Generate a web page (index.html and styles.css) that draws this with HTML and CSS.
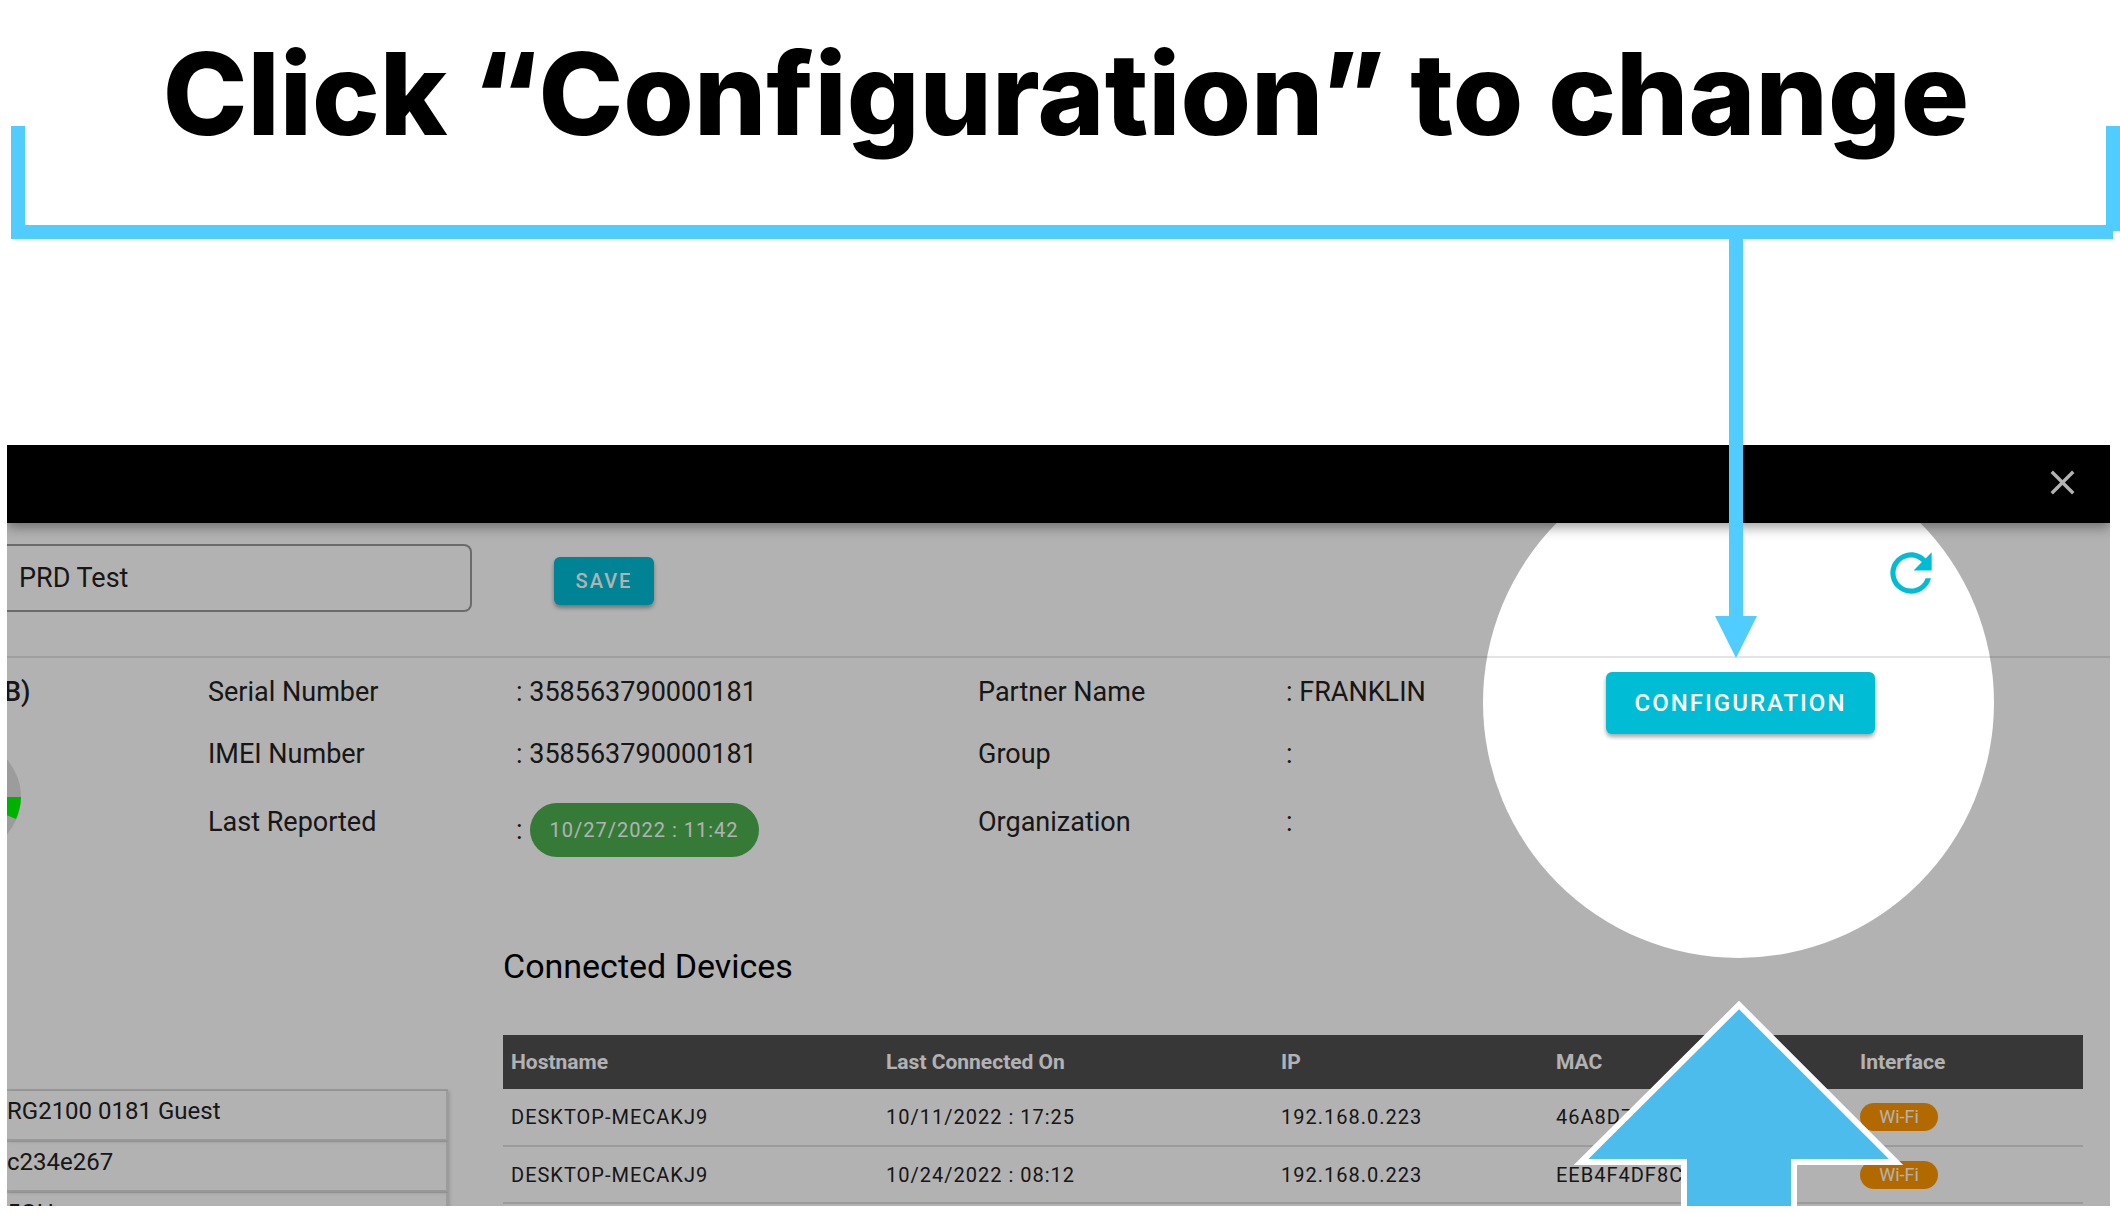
FILE: index.html
```html
<!DOCTYPE html>
<html lang="en">
<head>
<meta charset="utf-8">
<title>Click “Configuration” to change</title>
<link rel="stylesheet" href="styles.css">
</head>
<body>
<header class="callout">
  <h1 class="callout-title">Click “Configuration” to change</h1>
  <div class="bracket"><span class="bracket-end"></span></div>
  <svg class="pointer" width="42" height="419" viewBox="0 0 42 419" aria-hidden="true"><path d="M14 0h14v377h14L21 419 0 377h14z" fill="#50ccff"/></svg>
</header>

<main class="panel">
  <div class="topbar">
    <button class="close" type="button" aria-label="Close">
      <svg width="41" height="41" viewBox="0 0 24 24"><path fill="#fff" d="M19,6.41L17.59,5L12,10.59L6.41,5L5,6.41L10.59,12L5,17.59L6.41,19L12,13.41L17.59,19L19,17.59L13.41,12L19,6.41Z"/></svg>
    </button>
  </div>

  <form class="name-row">
    <input class="name-input" type="text" value="PRD Test" aria-label="Device name">
    <button class="btn btn-save" type="button">SAVE</button>
    <button class="refresh" type="button" aria-label="Refresh">
      <svg width="62" height="62" viewBox="0 0 24 24"><path fill="#00bcd4" d="M17.65,6.35C16.2,4.9 14.21,4 12,4A8,8 0 0,0 4,12A8,8 0 0,0 12,20C15.73,20 18.84,17.45 19.73,14H17.65C16.83,16.33 14.61,18 12,18A6,6 0 0,1 6,12A6,6 0 0,1 12,6C13.66,6 15.14,6.69 16.22,7.78L13,11H20V4L17.65,6.35Z"/></svg>
    </button>
  </form>

  <section class="summary">
    <div class="usage">
      <strong class="usage-title">B)</strong>
      <svg class="usage-chart" width="14" height="114" viewBox="43 -57 14 114" aria-hidden="true">
        <circle r="57" fill="#e0e0e0"/>
        <path d="M0 0H57A57 57 0 0 1 52 22Z" fill="#00ff00"/>
      </svg>
    </div>
    <dl class="facts">
      <dt>Serial Number</dt><dd>: 358563790000181</dd>
      <dt>IMEI Number</dt><dd>: 358563790000181</dd>
      <dt>Last Reported</dt><dd class="stamp-line">:<span class="stamp">10/27/2022 : 11:42</span></dd>
    </dl>
    <dl class="facts">
      <dt>Partner Name</dt><dd>: FRANKLIN</dd>
      <dt>Group</dt><dd>:</dd>
      <dt>Organization</dt><dd>:</dd>
    </dl>
    <button class="btn btn-config" type="button">CONFIGURATION</button>
  </section>

  <div class="lower">
    <ul class="ssids">
      <li>RG2100 0181 Guest</li>
      <li>c234e267</li>
      <li>5GHz</li>
    </ul>
    <section class="devices">
      <h2 class="devices-title">Connected Devices</h2>
      <table class="devices-table">
        <colgroup><col class="c-host"><col class="c-last"><col class="c-ip"><col class="c-mac"><col class="c-if"></colgroup>
        <thead><tr><th>Hostname</th><th>Last Connected On</th><th>IP</th><th>MAC</th><th>Interface</th></tr></thead>
        <tbody>
          <tr><td>DESKTOP-MECAKJ9</td><td>10/11/2022 : 17:25</td><td>192.168.0.223</td><td>46A8D7</td><td><span class="chip">Wi-Fi</span></td></tr>
          <tr><td>DESKTOP-MECAKJ9</td><td>10/24/2022 : 08:12</td><td>192.168.0.223</td><td>EEB4F4DF8C</td><td><span class="chip">Wi-Fi</span></td></tr>
        </tbody>
      </table>
    </section>
  </div>

  <div class="spotlight"></div>
  <svg class="big-arrow" width="330" height="206" viewBox="0 0 330 206" aria-hidden="true"><path d="M110 216V162H7L165 5 322 162H220V216" fill="#4cbcec" stroke="#fff" stroke-width="6"/></svg>
</main>
</body>
</html>
```

FILE: styles.css
```css
* { box-sizing: border-box; }

body {
  margin: 0;
  background: #fff;
  color: #222;
  font-family: Roboto, "Liberation Sans", sans-serif;
  font-size: 27px;
  line-height: 32px;
}

/* Callout above the panel */
.callout {
  position: relative;
  height: 445px;
}
.callout-title {
  margin: 0;
  padding: 24px 0 0 12px;
  color: #000;
  font-family: Inter, "Open Sans", sans-serif;
  font-size: 114px;
  font-weight: 800;
  line-height: 140px;
  text-align: center;
  white-space: nowrap;
}
.bracket {
  position: absolute;
  top: 126px;
  left: 11px;
  right: 7px;
  height: 113px;
  border-left: 14px solid #50ccff;
  border-bottom: 14px solid #50ccff;
}
.bracket-end {
  position: absolute;
  top: 0;
  right: -7px;
  width: 14px;
  height: 105px;
  background: #50ccff;
}
.pointer {
  position: absolute;
  top: 239px;
  right: 363px;
  z-index: 2;
}

/* Device panel */
.panel {
  position: relative;
  height: 761px;
  margin: 0 10px 7px 7px;
  overflow: hidden;
  background: #fff;
}
.topbar {
  position: relative;
  display: flex;
  align-items: center;
  justify-content: flex-end;
  height: 78px;
  padding: 0 27px 4px 0;
  background: #000;
  box-shadow: 0 4px 12px rgba(0, 0, 0, .4);
}
.close,
.refresh {
  display: flex;
  padding: 0;
  border: 0;
  background: none;
}
.name-row {
  display: flex;
  align-items: flex-start;
  height: 135px;
  padding-top: 21px;
  border-bottom: 2px solid #e4e4e4;
}
.name-input {
  width: 465px;
  height: 68px;
  padding: 0 12px;
  border: 2px solid #9a9a9a;
  border-left: 0;
  border-radius: 0 8px 8px 0;
  background: none;
  color: #222;
  font: inherit;
}
.btn {
  border: 0;
  border-radius: 6px;
  background: #00bcd4;
  box-shadow: 0 3px 4px rgba(0, 0, 0, .35);
  color: #fff;
  font-family: inherit;
  font-weight: 500;
  letter-spacing: 2px;
}
.btn-save {
  width: 100px;
  height: 48px;
  margin: 13px 0 0 82px;
  padding: 0;
  font-size: 20px;
}
.refresh { margin: -2px 168px 0 auto; }

.summary {
  display: flex;
  align-items: flex-start;
  height: 280px;
}
.usage {
  width: 201px;
  padding-top: 18px;
}
.usage-title {
  display: block;
  margin-left: -3px;
  font-weight: 500;
}
.usage-chart {
  display: block;
  margin-top: 32px;
}
.facts {
  display: grid;
  grid-template-columns: 308px 1fr;
  grid-template-rows: 62px 62px 68px;
  width: 770px;
  margin: 0;
  padding-top: 18px;
}
.facts + .facts { width: 460px; }
.facts dt { margin: 0; }
.facts dt:nth-of-type(3),
.facts dd:nth-of-type(3) { padding-top: 6px; }
.facts dd { margin: 0; white-space: nowrap; }
.facts .stamp-line:nth-of-type(3) {
  display: flex;
  align-items: center;
  gap: 7px;
  height: 58px;
  padding-top: 2px;
}
.stamp {
  padding: 0 20px;
  border-radius: 27px;
  background: #4caf50;
  color: #fff;
  font-size: 20px;
  letter-spacing: 1px;
  line-height: 54px;
}
.btn-config {
  width: 269px;
  height: 62px;
  margin: 14px 235px 0 auto;
  padding: 0;
  font-size: 24px;
}

.lower {
  display: flex;
  align-items: flex-start;
}
.ssids {
  width: 441px;
  margin: 151px 55px 0 0;
  padding: 0;
  border-top: 2px solid #e0e0e0;
  list-style: none;
  font-size: 24px;
}
.ssids li {
  height: 51px;
  padding-top: 4px;
  border-right: 2px solid #e0e0e0;
  border-bottom: 3px solid #dedede;
  box-shadow: 2px 0 3px rgba(0, 0, 0, .15);
}
.devices {
  flex: 1;
  padding: 8px 27px 0 0;
}
.devices-title {
  margin: 0 0 49px;
  color: #000;
  font-size: 34px;
  font-weight: 400;
  line-height: 40px;
}
.devices-table {
  width: 100%;
  border-collapse: collapse;
  table-layout: fixed;
  font-size: 20px;
  letter-spacing: 1px;
  line-height: 24px;
}
.devices-table th {
  height: 54px;
  padding: 0 8px;
  background: #505050;
  color: #fff;
  font-size: 21px;
  font-weight: 700;
  letter-spacing: 0;
  text-align: left;
}
.devices-table td {
  height: 57px;
  padding: 0 8px;
  border-bottom: 2px solid #dedede;
}
.c-host { width: 375px; }
.c-last { width: 395px; }
.c-ip { width: 275px; }
.c-mac { width: 304px; }
.chip {
  display: block;
  width: 78px;
  border-radius: 14px;
  background: #ff9800;
  color: #fff;
  font-size: 18px;
  letter-spacing: 0;
  line-height: 28px;
  text-align: center;
}

/* Dims everything except a circle round the configuration button */
.spotlight {
  position: absolute;
  top: 2px;
  right: 116px;
  width: 511px;
  height: 511px;
  border-radius: 50%;
  box-shadow: 0 0 0 2200px rgba(0, 0, 0, .3);
  pointer-events: none;
}
.big-arrow {
  position: absolute;
  right: 206px;
  bottom: 0;
}
```
